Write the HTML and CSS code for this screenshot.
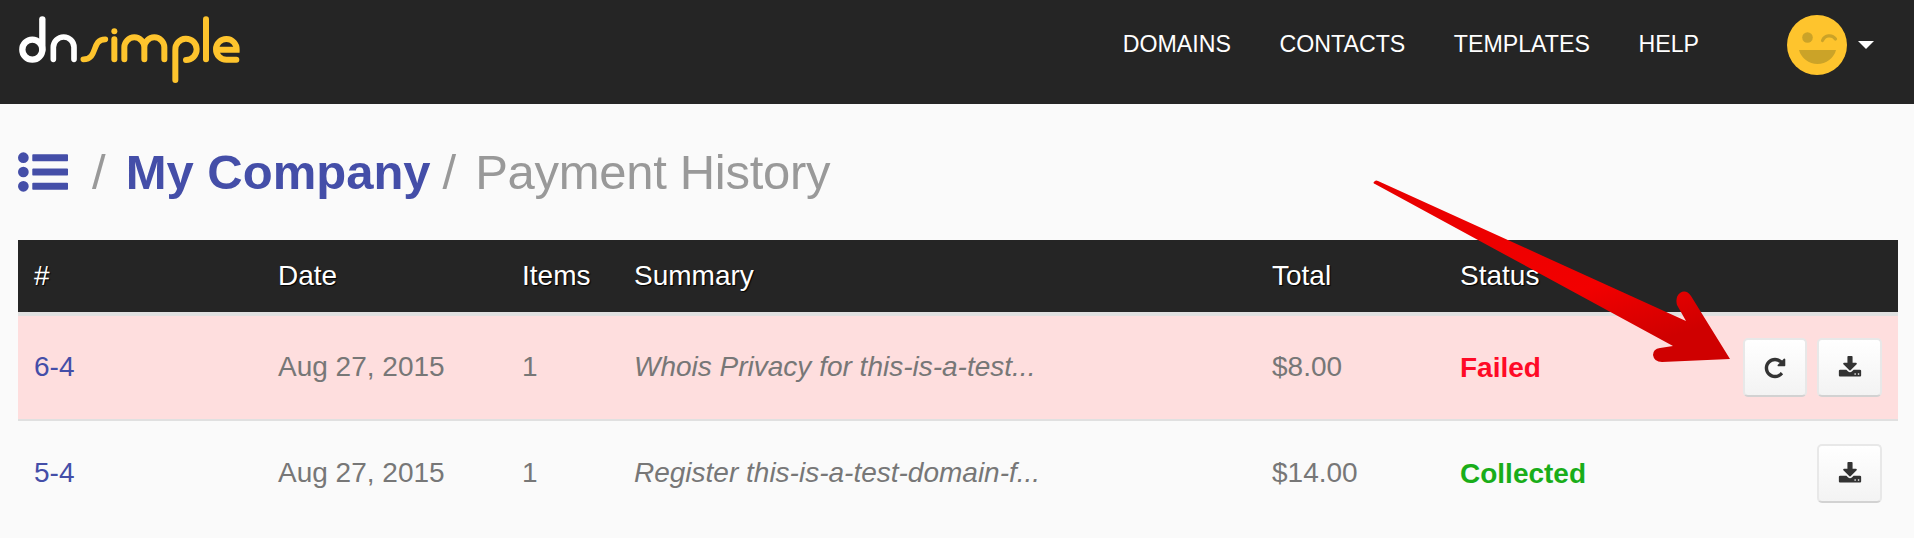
FILE: index.html
```html
<!DOCTYPE html>
<html>
	<head>
		<meta charset="UTF-8">
		<title>Payment History</title>
		<link rel="stylesheet" href="styles.css">
	</head>
	<body>
		<div class="topbar">
			<a class="logo" href="#" aria-label="dnsimple">
				<svg width="224" height="68" viewBox="54 48 672 204" fill="none" stroke-linecap="round">
					<g stroke="#fff" stroke-width="19">
						<circle cx="97" cy="149" r="30"/>
						<path d="M127 58V149"/>
					</g>
					<path d="M160 178V142a31 31 0 0 1 62 0V178" stroke="#fff" stroke-width="17"/>
					<g stroke="#fec42d" stroke-width="18">
						<path d="M250 178C296 178 272 118 316 118" stroke-width="17"/>
						<path d="M343 118V178"/>
						<path d="M373 178V142a30 30 0 0 1 60 0V178M433 142a30 30 0 0 1 60 0V178"/>
						<path d="M526 240V150a32 32 0 1 1 32 30"/>
						<path d="M618 58V178"/>
						<path d="M652 149H710a31 31 0 1 0-31 30H709"/>
					</g>
					<circle cx="343" cy="94" r="9" fill="#fec42d"/>
				</svg>
			</a>
			<div class="nav">
				<a href="#">DOMAINS</a>
				<a href="#">CONTACTS</a>
				<a href="#">TEMPLATES</a>
				<a href="#">HELP</a>
			</div>
			<div class="user">
				<svg width="60" height="60" viewBox="0 0 60 60">
					<circle cx="30" cy="30" r="30" fill="#fec42d"/>
					<circle cx="20.5" cy="22.500" r="5.300" fill="#cba328"/>
					<path d="M35.500 25.500a7.500 7.500 0 0 1 13-1.500" fill="none" stroke="#cba328" stroke-width="3.200" stroke-linecap="round"/>
					<path d="M12 35H49C47 43 39 49 30.500 49S14 43 12 35z" fill="#cba328"/>
				</svg>
				<span class="caret"></span>
			</div>
		</div>
		<div class="content">
			<h1 class="title">
				<svg class="listicon" width="50" height="50" viewBox="0 0 1792 1792"><path d="M384 1408q0 80-56 136t-136 56-136-56-56-136 56-136 136-56 136 56 56 136zm0-512q0 80-56 136t-136 56-136-56-56-136 56-136 136-56 136 56 56 136zm1408 416v192q0 13-9.500 22.500t-22.500 9.500h-1216q-13 0-22.500-9.500t-9.500-22.500v-192q0-13 9.500-22.500t22.500-9.500h1216q13 0 22.500 9.500t9.500 22.500zm-1408-928q0 80-56 136t-136 56-136-56-56-136 56-136 136-56 136 56 56 136zm1408 416v192q0 13-9.500 22.500t-22.500 9.500h-1216q-13 0-22.500-9.500t-9.500-22.500v-192q0-13 9.500-22.500t22.500-9.500h1216q13 0 22.500 9.500t9.500 22.500zm0-512v192q0 13-9.500 22.500t-22.500 9.500h-1216q-13 0-22.500-9.500t-9.500-22.500v-192q0-13 9.500-22.500t22.500-9.500h1216q13 0 22.500 9.500t9.500 22.500z"/></svg>
				<span class="sep">/</span>
				<a href="#">My Company</a>
				<span class="sep sep-last">/</span>
				<span class="page">Payment History</span>
			</h1>
			<table class="payments">
				<colgroup>
					<col class="c-id">
					<col class="c-date">
					<col class="c-items">
					<col class="c-summary">
					<col class="c-total">
					<col class="c-status">
					<col>
				</colgroup>
				<thead>
					<tr>
						<th>#</th>
						<th>Date</th>
						<th>Items</th>
						<th>Summary</th>
						<th>Total</th>
						<th>Status</th>
						<th></th>
					</tr>
				</thead>
				<tbody>
					<tr class="failed">
						<td><a href="#">6-4</a></td>
						<td>Aug 27, 2015</td>
						<td>1</td>
						<td class="summary">Whois Privacy for this-is-a-test...</td>
						<td>$8.00</td>
						<td class="st-failed">Failed</td>
						<td class="actions">
							<a class="btn btn-retry" href="#"><svg width="24" height="24" viewBox="0 0 1792 1792"><path d="M1664 256v448q0 26-19 45t-45 19h-448q-42 0-59-40-17-39 14-69l138-138q-148-137-349-137-104 0-198.500 40.500t-163.500 109.500-109.500 163.500-40.500 198.500 40.500 198.500 109.500 163.500 163.500 109.500 198.500 40.500q119 0 225-52t179-147q7-10 23-12 15 0 25 9l137 138q9 8 9.500 20.500t-7.500 22.500q-109 132-264 204.500t-327 72.500q-156 0-298-61t-245-164-164-245-61-298 61-298 164-245 245-164 298-61q147 0 284.500 55.500t244.500 156.500l130-129q29-31 70-14 39 17 39 59z"/></svg></a>
							<a class="btn" href="#"><svg width="24" height="24" viewBox="0 0 1792 1792"><path d="M1344 1344q0-26-19-45t-45-19-45 19-19 45 19 45 45 19 45-19 19-45zm256 0q0-26-19-45t-45-19-45 19-19 45 19 45 45 19 45-19 19-45zm128-224v320q0 40-28 68t-68 28h-1472q-40 0-68-28t-28-68v-320q0-40 28-68t68-28h465l135 136q58 56 136 56t136-56l136-136h464q40 0 68 28t28 68zm-325-569q17 41-14 70l-448 448q-18 19-45 19t-45-19l-448-448q-31-29-14-70 17-39 59-39h256v-448q0-26 19-45t45-19h256q26 0 45 19t19 45v448h256q42 0 59 39z"/></svg></a>
						</td>
					</tr>
					<tr>
						<td><a href="#">5-4</a></td>
						<td>Aug 27, 2015</td>
						<td>1</td>
						<td class="summary">Register this-is-a-test-domain-f...</td>
						<td>$14.00</td>
						<td class="st-collected">Collected</td>
						<td class="actions">
							<a class="btn" href="#"><svg width="24" height="24" viewBox="0 0 1792 1792"><path d="M1344 1344q0-26-19-45t-45-19-45 19-19 45 19 45 45 19 45-19 19-45zm256 0q0-26-19-45t-45-19-45 19-19 45 19 45 45 19 45-19 19-45zm128-224v320q0 40-28 68t-68 28h-1472q-40 0-68-28t-28-68v-320q0-40 28-68t68-28h465l135 136q58 56 136 56t136-56l136-136h464q40 0 68 28t28 68zm-325-569q17 41-14 70l-448 448q-18 19-45 19t-45-19l-448-448q-31-29-14-70 17-39 59-39h256v-448q0-26 19-45t45-19h256q26 0 45 19t19 45v448h256q42 0 59 39z"/></svg></a>
						</td>
					</tr>
				</tbody>
			</table>
		</div>
		<svg class="arrow" width="370" height="195" viewBox="1370 175 370 195">
			<defs>
				<linearGradient id="red" x1="0" y1="0" x2="0.6" y2="1">
					<stop offset="0" stop-color="#e80000"/>
					<stop offset="0.7" stop-color="#f20000"/>
					<stop offset="1" stop-color="#cf0000"/>
				</linearGradient>
			</defs>
			<path d="M1375 181Q1376 180 1378 181L1686 321L1677 305Q1675 297 1680 293Q1686 289 1691 296L1730 359L1662 362Q1654 362 1653 355Q1653 349 1660 348L1673 346L1375 184Q1372 183 1375 181z" fill="url(#red)"/>
		</svg>
	</body>
</html>
```

FILE: styles.css
```css
*{
	margin: 0;
	padding: 0;
	box-sizing: border-box;
}
body{
	background: #fafafa;
	font-family: "Liberation Sans", Arial, sans-serif;
	color: #777;
	overflow: hidden;
}
a{
	text-decoration: none;
}
.topbar{
	height: 104px;
	background: #252525;
	display: flex;
	align-items: center;
	padding: 0 40px 0 18px;
}
.logo{
	display: flex;
	margin-top: -4px;
}
.nav{
	display: flex;
	gap: 48.500px;
	margin-left: auto;
	margin-top: -16px;
}
.nav a{
	color: #fff;
	font-size: 23.200px;
}
.user{
	display: flex;
	align-items: center;
	margin-left: 88px;
	margin-top: -14px;
}
.caret{
	width: 0;
	height: 0;
	margin-left: 11px;
	border-left: 8px solid transparent;
	border-right: 8px solid transparent;
	border-top: 8px solid #fff;
}
.content{
	padding: 0 16px 0 18px;
}
.title{
	display: flex;
	align-items: center;
	height: 136px;
	gap: 14px;
	font-size: 49px;
	font-weight: normal;
	color: #999;
}
.title a{
	color: #444ea8;
	font-weight: bold;
	margin-left: 6px;
}
.sep-last{
	margin-left: -2px;
}
.page{
	margin-left: 5px;
	letter-spacing: -0.300px;
}
.listicon{
	fill: #444ea8;
	margin-right: 10px;
}
.payments{
	width: 100%;
	border-collapse: collapse;
	table-layout: fixed;
	font-size: 28px;
}
.c-id,.c-date{
	width: 244px;
}
.c-items{
	width: 112px;
}
.c-summary{
	width: 638px;
}
.c-total{
	width: 188px;
}
.c-status{
	width: 188px;
}
.payments th{
	height: 74px;
	background: #252525;
	border-bottom: 4px solid #e0e0e0;
	color: #fff;
	font-weight: normal;
	text-align: left;
	padding: 0 16px;
	text-shadow: 1px 1px 1px #000;
}
.payments td{
	height: 106px;
	padding: 0 16px 2px;
	border-bottom: 2px solid #e0e0e0;
}
.payments tbody tr:last-child td{
	border-bottom: 0;
}
.payments td a{
	color: #444ea8;
}
.failed td{
	background: #fedede;
}
.summary{
	font-style: italic;
}
.payments td.st-failed{
	color: #ff0a26;
	font-weight: bold;
	padding-bottom: 0;
}
.payments td.st-collected{
	color: #19ad19;
	font-weight: bold;
	padding-bottom: 0;
}
.actions{
	text-align: right;
	white-space: nowrap;
}
.payments td.actions{
	padding: 0 16px 0 0;
}
.payments td .btn{
	display: inline-flex;
	align-items: center;
	justify-content: center;
	width: 65px;
	height: 59px;
	vertical-align: middle;
	background: linear-gradient(#fff, #f3f3f3);
	border: 2px solid #e8e8e8;
	border-bottom-color: #d2d2d2;
	border-radius: 5px;
	fill: #333;
}
.payments td .btn-retry{
	width: 64px;
	margin-right: 2px;
}
.arrow{
	position: absolute;
	left: 1370px;
	top: 175px;
}
```
